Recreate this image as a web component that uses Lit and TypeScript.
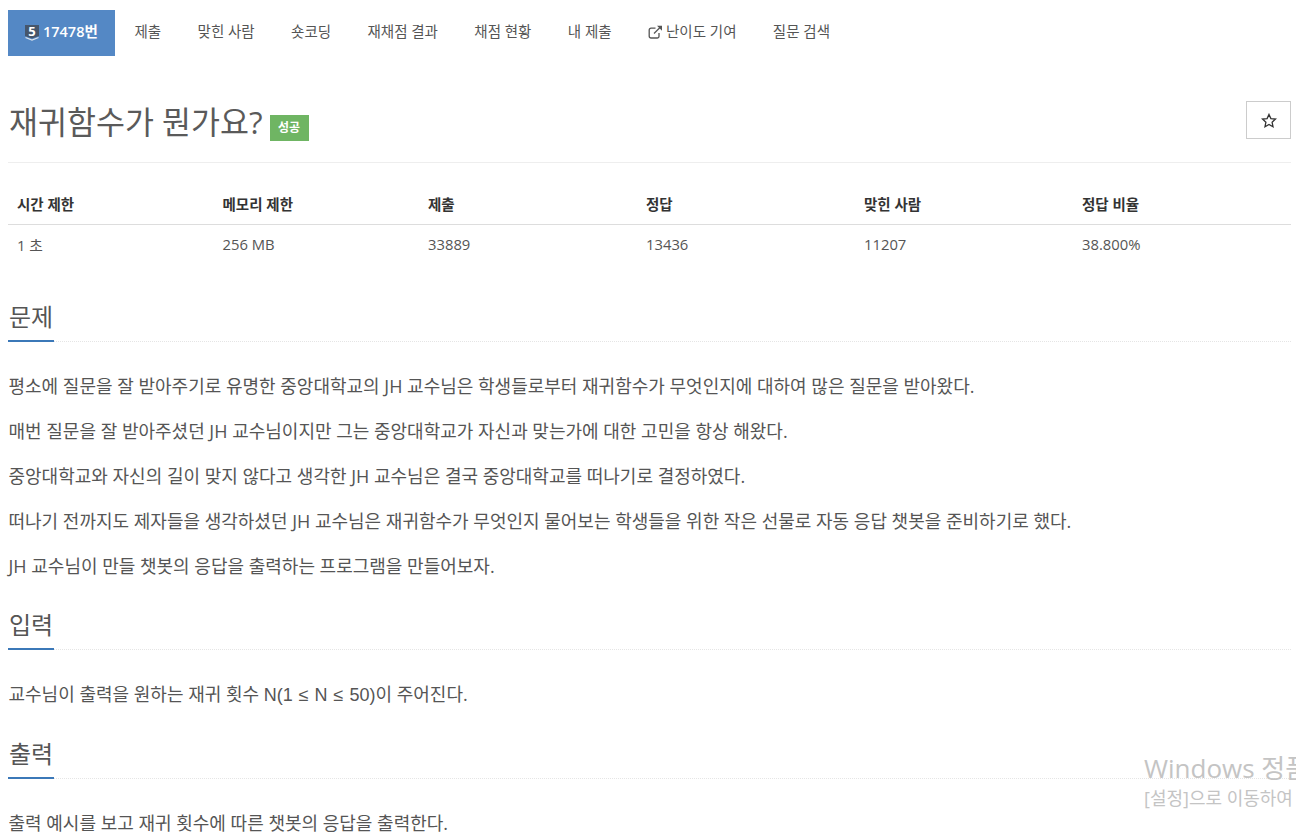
import { LitElement, html, css } from "lit";
import { customElement } from "lit/decorators.js";

const tabs = ["제출", "맞힌 사람", "숏코딩", "재채점 결과", "채점 현황", "내 제출"];
const heads = [["시간 제한", "1 초", 205.5], ["메모리 제한", "256 MB", 205.5], ["제출", "33889", 218], ["정답", "13436", 218], ["맞힌 사람", "11207", 218], ["정답 비율", "38.800%", 218]];
const problem = [
  "평소에 질문을 잘 받아주기로 유명한 중앙대학교의 JH 교수님은 학생들로부터 재귀함수가 무엇인지에 대하여 많은 질문을 받아왔다.",
  "매번 질문을 잘 받아주셨던 JH 교수님이지만 그는 중앙대학교가 자신과 맞는가에 대한 고민을 항상 해왔다.",
  "중앙대학교와 자신의 길이 맞지 않다고 생각한 JH 교수님은 결국 중앙대학교를 떠나기로 결정하였다.",
  "떠나기 전까지도 제자들을 생각하셨던 JH 교수님은 재귀함수가 무엇인지 물어보는 학생들을 위한 작은 선물로 자동 응답 챗봇을 준비하기로 했다.",
  "JH 교수님이 만들 챗봇의 응답을 출력하는 프로그램을 만들어보자.",
];

@customElement("app-root")
export class AppRoot extends LitElement {
  static styles = css`
    :host {
      display: block; position: relative; height: 835px; overflow: hidden; background: #fff;
      font-family: "Open Sans", "Noto Sans CJK KR", sans-serif; color: #555; font-size: 14px;
    }
    .page { padding: 10px 5px 0 8px; }
    nav { display: flex; height: 46px; }
    .tab { display: flex; align-items: center; padding: 0 18.2px 2px; font-size: 14.5px; color: #555; line-height: 20px; white-space: nowrap; box-sizing: border-box; }
    .tab.first { padding-left: 19.5px; }
    .tab.active { background: #5488c5; color: #fff; font-weight: 600; padding: 0 16px 2px; gap: 3px; font-size: 14.5px; width: 107px; }
    .tab svg { display: block; }
    .ext { margin-right: 3px; }
    .title { display: flex; align-items: flex-start; justify-content: space-between; margin-top: 45px; height: 61px; border-bottom: 1px solid #eee; }
    h1 { margin: 0; font-size: 31.5px; font-weight: 400; line-height: 42px; color: #5a5a5a; display: flex; align-items: flex-start; gap: 7px; white-space: nowrap; padding-left: 1px; }
    .label { background: #6fb563; color: #fff; font-size: 12px; line-height: 26px; font-weight: 600; height: 26px; width: 39px; display: flex; align-items: center; justify-content: center; margin-top: 14px; }
    .star { width: 45px; height: 38px; box-sizing: border-box; border: 1px solid #ccc; display: flex; align-items: center; justify-content: center; }
    table { margin-top: 20px; width: 100%; border-collapse: collapse; table-layout: fixed; }
    th { text-align: left; font-weight: 700; color: #333; height: 41px; padding: 0 9px; border-bottom: 1px solid #ddd; box-sizing: border-box; font-size: 14.5px; }
    td { height: 40px; padding: 0 9px; color: #555; box-sizing: border-box; font-size: 14.8px; }
    .head { border-bottom: 1px dotted #e5e5e5; height: 41px; font-size: 24px; line-height: 34px; color: #555; }
    .head span { display: inline-block; height: 40px; border-bottom: 2px solid #3b78b8; min-width: 45px; padding-left: 1px; box-sizing: content-box; }
    .problem { margin-top: 32px; }
    p { margin: 0 0 20px; padding-left: 0.5px; font-size: 18px; line-height: 25px; color: #555; white-space: nowrap; }
    .math { font-family: "Liberation Sans", sans-serif; word-spacing: 1px; }
    .sect { margin-top: 36px; }
    .sect2 { margin-top: 29px; }
    .body { margin-top: 32px; }
    .wm { position: absolute; left: 1144px; top: 750px; color: #c4c4c4; white-space: nowrap; pointer-events: none; }
    .wm1 { font-size: 26px; line-height: 36px; }
    .wm2 { font-size: 18px; line-height: 24px; }
  `;

  render() {
    return html`<div class="page">
      <nav>
        <div class="tab active">
          <svg width="16" height="18" viewBox="0 0 16 18"><path d="M1 2h14v11l-7 2.5L1 13z" fill="#46566b"/><path d="M1.5 14.5l6.5 2.5 6.5-2.5" stroke="#dfe5ec" fill="none" stroke-width="1.2"/><text x="8" y="12.6" text-anchor="middle" font-size="13" font-weight="700" fill="#fff" font-family="Open Sans">5</text></svg>
          17478번
        </div>
        ${tabs.map((t, i) => html`<div class="tab ${i === 0 ? "first" : ""}">${t}</div>`)}
        <div class="tab">
          <svg class="ext" width="15" height="14" viewBox="0 0 15 14" fill="none" stroke="#555" stroke-width="1.3"><path d="M11 8v3.2a1.8 1.8 0 0 1-1.8 1.8H3a1.8 1.8 0 0 1-1.8-1.8V5A1.8 1.8 0 0 1 3 3.2h4.5"/><path d="M6 8.5L13 1.5"/><path d="M9 .8h5v5z" fill="#555" stroke="none"/></svg>
          난이도 기여
        </div>
        <div class="tab">질문 검색</div>
      </nav>
      <div class="title">
        <h1>재귀함수가 뭔가요? <span class="label">성공</span></h1>
        <div class="star"><svg width="16" height="15" viewBox="0 0 16 15"><path d="M8 1.4l1.9 4.2 4.6.5-3.4 3.1.9 4.5L8 11.5l-4 2.2.9-4.5L1.5 6.1l4.6-.5z" fill="none" stroke="#333" stroke-width="1.3"/></svg></div>
      </div>
      <table>
        <colgroup>${heads.map((h) => html`<col style="width:${h[2]}px" />`)}</colgroup>
        <tr>${heads.map((h) => html`<th>${h[0]}</th>`)}</tr>
        <tr>${heads.map((h) => html`<td>${h[1]}</td>`)}</tr>
      </table>
      <div class="head sect"><span>문제</span></div>
      <div class="problem">${problem.map((t) => html`<p>${t}</p>`)}</div>
      <div class="head sect2"><span>입력</span></div>
      <div class="body"><p>교수님이 출력을 원하는 재귀 횟수 <span class="math">N(1 ≤ N ≤ 50)</span>이 주어진다.</p></div>
      <div class="head sect2"><span>출력</span></div>
      <div class="body"><p>출력 예시를 보고 재귀 횟수에 따른 챗봇의 응답을 출력한다.</p></div>
    </div>
    <div class="wm"><div class="wm1">Windows 정품 인증</div><div class="wm2">[설정]으로 이동하여 Windows를 정품 인증합니다.</div></div>`;
  }
}
